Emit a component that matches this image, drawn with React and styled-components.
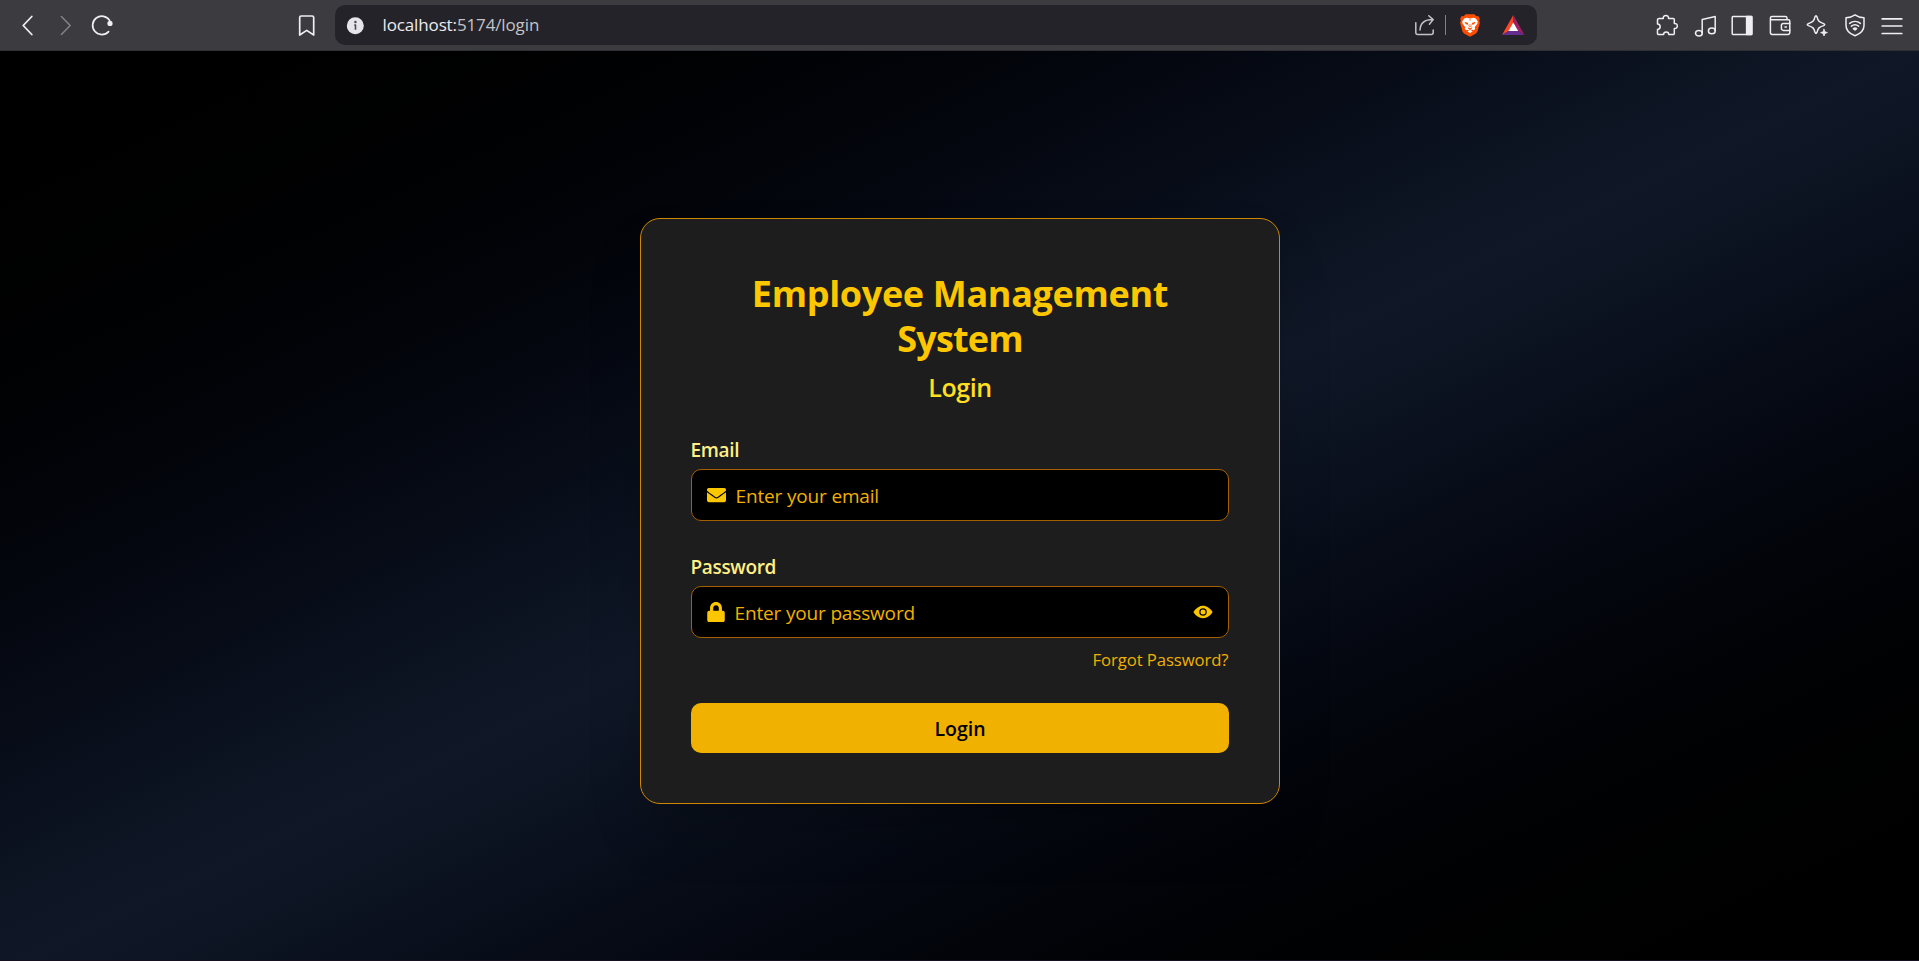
import React, { useState } from 'react';
import styled, { createGlobalStyle } from 'styled-components';
import { FaEnvelope, FaLock } from 'react-icons/fa';
import { IoEye } from 'react-icons/io5';

const GlobalStyle = createGlobalStyle`
  *, *::before, *::after { box-sizing: border-box; }
  body {
    margin: 0;
    background: #000;
    font-family: "Segoe UI", "Open Sans", "Noto Sans", sans-serif;
  }
`;

const Window = styled.div`
  display: flex;
  flex-direction: column;
  height: 961px;
  overflow: hidden;
  border-bottom: 1px solid #14101f;
`;

/* Browser toolbar */
const Toolbar = styled.header`
  flex: none;
  display: flex;
  align-items: center;
  height: 51px;
  padding: 0 8px 0 9px;
  background: #3c3b40;
  border-bottom: 1px solid #302f34;
`;

const ToolButton = styled.button`
  flex: none;
  display: grid;
  place-items: center;
  width: ${(p) => p.$width || 37.5}px;
  height: 40px;
  margin-left: ${(p) => p.$before || 0}px;
  padding: 0;
  border: 0;
  background: none;
  color: ${(p) => (p.$muted ? '#848388' : '#efeef2')};
`;

const Glyph = styled.svg.attrs({ viewBox: '0 0 24 24', width: 24, height: 24 })`
  display: block;
  overflow: visible;
  fill: none;
  stroke: currentColor;
  stroke-width: ${(p) => p.$stroke || 1.5};
  stroke-linecap: round;
  stroke-linejoin: round;
`;

const AddressBar = styled.div`
  flex: none;
  display: flex;
  align-items: center;
  width: 1202px;
  height: 40px;
  margin-left: 10px;
  padding: 0 3px 0 8px;
  border-radius: 10px;
  background: #242329;
  color: #c3c2c8;
`;

const Address = styled.span`
  flex: 1;
  margin-left: 15.5px;
  font-size: 17px;
  line-height: 24px;
  letter-spacing: -0.13px;
`;

const Host = styled.span`
  color: #ecebf0;
`;

const Divider = styled.span`
  width: 1px;
  height: 20px;
  margin: 0 2px 0 8px;
  background: #828187;
`;

const ExtensionBar = styled.div`
  display: flex;
  margin-left: auto;
`;

/* Login page */
const Page = styled.main`
  flex: none;
  display: flex;
  align-items: center;
  justify-content: center;
  height: 920px;
  background: linear-gradient(to bottom right in oklab, #000 0%, #101828 50%, #000 100%);
`;

const Card = styled.form`
  width: 640px;
  height: 586px;
  padding: 52px 50px 50px;
  border: 1px solid #d08700;
  border-radius: 20px;
  background: #1d1d1d;
  box-shadow: 0 31px 62px -15px rgba(0, 0, 0, 0.25);
`;

const Title = styled.h1`
  margin: 0;
  padding-left: 1px;
  color: #fdc700;
  font-size: 36px;
  font-weight: 700;
  line-height: 45px;
  text-align: center;
`;

const TitleLine = styled.span`
  display: block;
  letter-spacing: ${(p) => p.$spacing}px;
`;

const Subtitle = styled.h2`
  margin: 9px 0 30px;
  padding-left: 1px;
  color: #ffdf20;
  font-size: 25px;
  font-weight: 600;
  line-height: 35px;
  letter-spacing: -0.4px;
  text-align: center;
`;

const Field = styled.div`
  & + & {
    margin-top: 31px;
  }
`;

const Label = styled.label`
  display: block;
  margin-bottom: 4px;
  color: #fff085;
  font-size: 19px;
  font-weight: 600;
  line-height: 30px;
  letter-spacing: -0.35px;
`;

const InputBox = styled.div`
  display: flex;
  align-items: center;
  height: 52px;
  padding: 0 15px;
  border: 1px solid #a65f00;
  border-radius: 10px;
  background: #000;
  color: #fdc700;
`;

const FieldIcon = styled.span`
  flex: none;
  display: flex;
  justify-content: center;
  width: ${(p) => p.$width}px;

  svg {
    flex: none;
    width: ${(p) => p.$width}px;
    height: 20px;
  }
`;

const Input = styled.input`
  flex: 1;
  min-width: 0;
  height: 30px;
  margin-left: 10px;
  padding: 1px 0 0;
  border: 0;
  outline: 0;
  background: transparent;
  color: #fdc700;
  font: inherit;
  font-size: 19px;
  letter-spacing: -0.16px;

  &::placeholder {
    color: #f0b100;
    opacity: 1;
  }
`;

const RevealButton = styled.button`
  display: flex;
  padding: 0;
  border: 0;
  background: none;
  color: inherit;
`;

const ForgotRow = styled.div`
  margin-top: 9px;
  text-align: right;
  line-height: 25px;
  font-size: 16.7px;
  letter-spacing: -0.08px;
`;

const ForgotLink = styled.a`
  color: #f0b100;
  text-decoration: none;
`;

const SubmitButton = styled.button`
  display: block;
  width: 100%;
  height: 50px;
  margin-top: 31px;
  padding: 0 0 0 1px;
  border: 0;
  border-radius: 10px;
  background: #f0b100;
  color: #000;
  font: inherit;
  font-size: 19.5px;
  font-weight: 600;
`;

const Logo = styled.svg.attrs({ viewBox: '0 0 24 24', width: 24, height: 24 })`
  display: block;
`;

const BraveLion = () => (
  <Logo>
    <path d="M7.6 1.2h8.8l1.9 2 2-.1 1.5 2.6-.6 1.700.7 2.300-2.400 8.800-1.500 2.100L12 23.800l-6-3.200-1.500-2.100-2.400-8.800.7-2.300-.6-1.700 1.500-2.600 2 .1z" fill="#ff4d00" />
    <path d="M6.2 5.4 8.6 4.8 12 5.6l3.4-.8 2.4.6 2 3.2-.5 2.2-2.6 3.4.5 1.8-1.6 1.2-1.6-.5-2 1.5-2-1.5-1.6.5-1.6-1.2.5-1.8-2.6-3.4-.5-2.2z" fill="#fff" />
    <path d="M9.4 18.2 12 17l2.6 1.2L12 20.3z" fill="#fff" />
    <path d="M6.4 8.8l3.8 1.2-.4 1.7-2-.5zM17.6 8.8l-3.8 1.2.4 1.7 2-.5zM9.6 14.2l2.4 1 2.4-1-.9 1.8-1.5 1-1.5-1z" fill="#ff4d00" />
    <path d="M12 5.8v2M11.2 11.2l-.4 2 1.2.7 1.2-.7-.4-2" fill="none" stroke="#ff4d00" strokeWidth=".7" />
  </Logo>
);

const BatTriangle = () => (
  <Logo>
    <path d="M12.3 2 1 22l6.6-4 4.7-8z" fill="#ff4724" />
    <path d="M12.3 2 23.5 22 17 18l-4.7-8z" fill="#9e1f63" />
    <path d="M1 22h22.5L17 18H7.6z" fill="#662d91" />
    <path d="M12.3 9.6 7.4 18h9.8z" fill="#fff" />
  </Logo>
);

const BrowserToolbar = () => (
  <Toolbar>
    <ToolButton $width={38} aria-label="Back">
      <Glyph $stroke={1.8}><path d="M15.8 3.5 7.2 12.5l8.6 9" /></Glyph>
    </ToolButton>
    <ToolButton $width={38} $muted aria-label="Forward">
      <Glyph $stroke={1.5}><path d="m7.4 3.5 8.8 9-8.8 9" /></Glyph>
    </ToolButton>
    <ToolButton $width={38} aria-label="Reload">
      <Glyph $stroke={1.7}>
        <path d="M16.6 18.6A9.2 9.2 0 1 1 17.6 7.4" />
        <circle cx="18" cy="10.4" r="2.6" fill="currentColor" stroke="none" />
      </Glyph>
    </ToolButton>
    <ToolButton $width={38} $before={164} aria-label="Bookmark">
      <Glyph $stroke={1.7}><path d="M5.7 22V4.6a1.6 1.6 0 0 1 1.6-1.6h10.8a1.6 1.6 0 0 1 1.6 1.6V22l-7-4.6z" /></Glyph>
    </ToolButton>
    <AddressBar>
      <Glyph>
        <circle cx="12.3" cy="12.7" r="8.5" fill="#e6e5ea" stroke="none" />
        <path d="M11.2 12h1.3v4.8" stroke="#4a494f" strokeWidth="1.6" strokeLinecap="butt" />
        <circle cx="12.4" cy="9" r="1.2" fill="#4a494f" stroke="none" />
      </Glyph>
      <Address><Host>localhost:</Host>5174/login</Address>
      <Glyph $stroke={1.5}>
        <path d="M2.8 9.8V19.4a2 2 0 0 0 2 2h13.4a2 2 0 0 0 2-2V17" />
        <path d="M7 17c.3-6 4.4-10.4 13-10.4M15.8 2.8 20.2 6.6 16.4 11.2" />
      </Glyph>
      <Divider />
      <ToolButton as="span" $width={43}><BraveLion /></ToolButton>
      <ToolButton as="span" $width={43}><BatTriangle /></ToolButton>
    </AddressBar>
    <ExtensionBar>
      <ToolButton aria-label="Extensions">
        <Glyph><path d="M4.2 5.4H8.3C8 3.6 9.2 2.5 10.9 2.5S13.8 3.6 13.5 5.4H18.2A1.1 1.1 0 0 1 19.3 6.5V10.4C21.2 10.2 22.3 11.3 22.3 13S21.2 15.8 19.3 15.6V20.5A1.1 1.1 0 0 1 18.2 21.6H13.8C13.8 19.9 12.7 19 11.2 19S8.6 19.9 8.6 21.6H3.6A1.1 1.1 0 0 1 2.5 20.5V16.4C4.4 16.2 5.2 15.2 5.2 13.7S4.4 11.2 2.5 11V7A1.6 1.6 0 0 1 4.2 5.4Z" /></Glyph>
      </ToolButton>
      <ToolButton aria-label="Music">
        <Glyph>
          <path d="M9.2 20.2V6.4l13-2.8v14.2" />
          <ellipse cx="5.9" cy="20.2" rx="3.4" ry="2.8" />
          <ellipse cx="18.8" cy="17.9" rx="3.4" ry="2.8" />
        </Glyph>
      </ToolButton>
      <ToolButton aria-label="Sidebar">
        <Glyph>
          <rect x="2.2" y="3.6" width="19.6" height="17.8" rx="0.8" />
          <path d="M16.6 3.6h5.2v17.8h-5.2z" fill="currentColor" />
        </Glyph>
      </ToolButton>
      <ToolButton aria-label="Wallet">
        <Glyph>
          <path d="M19 6.6V5.2a1.6 1.6 0 0 0-1.6-1.6H4a1.6 1.6 0 0 0 0 3.2h16.4a1.4 1.4 0 0 1 1.4 1.4v11.4a1.8 1.8 0 0 1-1.8 1.8H4.2a1.8 1.8 0 0 1-1.8-1.8V5.2" />
          <path d="M21.8 10.6h-6.4a2 2 0 0 0-2 2v2.8a2 2 0 0 0 2 2h6.4M17 14h1.4" />
        </Glyph>
      </ToolButton>
      <ToolButton aria-label="Leo">
        <Glyph>
          <path d="M10 3.9q1-2.3 2 0c1 4.2 2.2 5.4 6.6 6.7q2.2 1 0 2c-4.4 1.3-5.6 2.5-6.6 6.7q-1 2.3-2 0c-1-4.2-2.2-5.4-6.6-6.7q-2.2-1 0-2c4.4-1.3 5.6-2.5 6.6-6.7z" />
          <path d="M19 16.2l.9 2.5 2.5.9-2.5.9-.9 2.5-.9-2.5-2.5-.9 2.5-.9z" fill="currentColor" strokeWidth="0.8" />
        </Glyph>
      </ToolButton>
      <ToolButton aria-label="VPN">
        <Glyph>
          <path d="M12 1.9c2.8 2 5.6 2.7 9 2.9v7.6c0 5-4 8.4-9 10.4-5-2-9-5.4-9-10.4V4.8c3.4-.2 6.2-.9 9-2.9z" />
          <path d="M6.6 10.4c3.2-2.6 7.6-2.6 10.8 0M8.4 13.2c2.2-1.7 5-1.7 7.2 0" />
          <path d="M10.4 15.6c1-.7 2.2-.7 3.2 0L12 17z" fill="currentColor" />
        </Glyph>
      </ToolButton>
      <ToolButton aria-label="Menu">
        <Glyph $stroke={1.7}><path d="M2.2 5.9h19.6M2.2 13h19.6M2.2 20.5h19.6" /></Glyph>
      </ToolButton>
    </ExtensionBar>
  </Toolbar>
);

export default function App() {
  const [visible, setVisible] = useState(false);

  return (
    <Window>
      <GlobalStyle />
      <BrowserToolbar />
      <Page>
        <Card onSubmit={(e) => e.preventDefault()}>
          <Title>
            <TitleLine $spacing={-0.33}>Employee Management </TitleLine>
            <TitleLine $spacing={-0.8}>System</TitleLine>
          </Title>
          <Subtitle>Login</Subtitle>
          <Field>
            <Label htmlFor="email">Email</Label>
            <InputBox>
              <FieldIcon $width={19}><FaEnvelope /></FieldIcon>
              <Input id="email" type="email" placeholder="Enter your email" />
            </InputBox>
          </Field>
          <Field>
            <Label htmlFor="password">Password</Label>
            <InputBox>
              <FieldIcon $width={18}><FaLock /></FieldIcon>
              <Input
                id="password"
                type={visible ? 'text' : 'password'}
                placeholder="Enter your password"
              />
              <RevealButton
                type="button"
                aria-label="Show password"
                onClick={() => setVisible(!visible)}
              >
                <IoEye size={20} />
              </RevealButton>
            </InputBox>
          </Field>
          <ForgotRow><ForgotLink href="#forgot">Forgot Password?</ForgotLink></ForgotRow>
          <SubmitButton type="submit">Login</SubmitButton>
        </Card>
      </Page>
    </Window>
  );
}
